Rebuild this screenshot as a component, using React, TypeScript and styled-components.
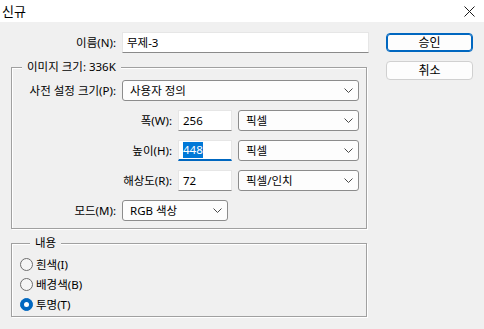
import React from "react";
import styled, { createGlobalStyle } from "styled-components";

const GlobalStyle = createGlobalStyle`
  html, body {
    margin: 0;
    padding: 0;
    background: #f0f0f0;
  }
  body {
    font-family: "Noto Sans", "Noto Sans CJK KR", sans-serif;
    font-size: 11.5px;
    color: #000;
  }
`;

const Window = styled.div`
  width: 484px;
  height: 329px;
  background: #f0f0f0;
  overflow: hidden;
`;

const TitleBar = styled.div`
  height: 22px;
  background: #ffffff;
  display: flex;
  align-items: center;
  justify-content: space-between;
  padding: 0 9px 0 2px;
`;

const Title = styled.span`
  font-size: 13px;
  line-height: 22px;
`;

const Body = styled.div`
  display: flex;
  padding: 10px 0 0 11px;
`;

const LeftColumn = styled.div`
  width: 358px;
  display: flex;
  flex-direction: column;
`;

const Row = styled.div`
  display: flex;
  align-items: center;
  gap: 6px;
  height: 21px;
`;

const Label = styled.span<{ $w: number }>`
  width: ${({ $w }) => $w}px;
  text-align: right;
  white-space: nowrap;
  line-height: 21px;
`;

const TextBox = styled.div<{ $w: number; $focused?: boolean }>`
  width: ${({ $w }) => $w}px;
  height: 21px;
  box-sizing: border-box;
  background: #ffffff;
  border: 1px solid #e6e6e6;
  border-bottom: ${({ $focused }) =>
    $focused ? "2px solid #0067c0" : "1px solid #8a8a8a"};
  padding: 0 4px;
  display: flex;
  align-items: center;
  line-height: 16px;
`;

const Selected = styled.span`
  background: #0078d7;
  color: #ffffff;
`;

const Select = styled.div<{ $w: number }>`
  width: ${({ $w }) => $w}px;
  height: 21px;
  box-sizing: border-box;
  background: #fdfdfd;
  border: 1px solid #8c8c8c;
  border-radius: 3px;
  padding: 0 5px 0 7px;
  display: flex;
  align-items: center;
  justify-content: space-between;
  line-height: 16px;
`;

const GroupBox = styled.fieldset`
  margin: 7px 0 0 0;
  width: 356px;
  box-sizing: border-box;
  border: 1px solid #a0a0a0;
  box-shadow: 1px 1px 0 #ffffff, inset 1px 1px 0 #ffffff;
  min-inline-size: 0;
`;

const SizeGroup = styled(GroupBox)`
  padding: 6px 0 7px 0;
  display: flex;
  flex-direction: column;
  gap: 9px;
`;

const ContentGroup = styled(GroupBox)`
  padding: 4px 0 2px 8px;
`;

const Legend = styled.legend`
  margin-left: 10px;
  padding: 0 5px;
  line-height: 14px;
  background: #f0f0f0;
`;

const RadioRow = styled.label`
  display: flex;
  align-items: center;
  gap: 3px;
  height: 20px;
`;

const RadioDot = styled.span<{ $checked?: boolean }>`
  width: 13px;
  height: 13px;
  box-sizing: border-box;
  border-radius: 50%;
  flex-shrink: 0;
  display: flex;
  align-items: center;
  justify-content: center;
  background: ${({ $checked }) => ($checked ? "#0067c0" : "#f5f5f5")};
  border: 1px solid ${({ $checked }) => ($checked ? "#0067c0" : "#6e6e6e")};

  &::after {
    content: "";
    display: ${({ $checked }) => ($checked ? "block" : "none")};
    width: 5px;
    height: 5px;
    border-radius: 50%;
    background: #ffffff;
  }
`;

const ButtonColumn = styled.div`
  margin-left: 17px;
  padding-top: 1px;
  width: 87px;
  display: flex;
  flex-direction: column;
  gap: 9px;
`;

const Button = styled.button<{ $primary?: boolean }>`
  width: 87px;
  height: 19px;
  box-sizing: border-box;
  padding: 0;
  font: inherit;
  font-size: 12px;
  line-height: 16px;
  color: #000;
  background: #fdfdfd;
  border-radius: 4px;
  border: 1px solid ${({ $primary }) => ($primary ? "#0067c0" : "#d0d0d0")};
  box-shadow: ${({ $primary }) => ($primary ? "inset 0 0 0 1px #0067c0" : "none")};
`;

function Chevron() {
  return (
    <svg width="9" height="5" viewBox="0 0 9 5">
      <path d="M0.5 0.5 L4.5 4.5 L8.5 0.5" fill="none" stroke="#4a4a4a" strokeWidth="1" />
    </svg>
  );
}

function CloseIcon() {
  return (
    <svg width="11" height="11" viewBox="0 0 11 11">
      <path d="M0.5 0.5 L10.5 10.5 M10.5 0.5 L0.5 10.5" stroke="#1a1a1a" strokeWidth="1" />
    </svg>
  );
}

function Dropdown({ w, children }: { w: number; children: React.ReactNode }) {
  return (
    <Select $w={w}>
      <span>{children}</span>
      <Chevron />
    </Select>
  );
}

export default function App() {
  return (
    <Window>
      <GlobalStyle />
      <TitleBar>
        <Title>신규</Title>
        <CloseIcon />
      </TitleBar>
      <Body>
        <LeftColumn>
          <Row>
            <Label $w={105}>이름(N):</Label>
            <TextBox $w={247}>무제-3</TextBox>
          </Row>

          <SizeGroup>
            <Legend>이미지 크기: 336K</Legend>
            <Row>
              <Label $w={104}>사전 설정 크기(P):</Label>
              <Dropdown w={237}>사용자 정의</Dropdown>
            </Row>
            <Row>
              <Label $w={160}>폭(W):</Label>
              <TextBox $w={54}>256</TextBox>
              <Dropdown w={121}>픽셀</Dropdown>
            </Row>
            <Row>
              <Label $w={160}>높이(H):</Label>
              <TextBox $w={54} $focused>
                <Selected>448</Selected>
              </TextBox>
              <Dropdown w={121}>픽셀</Dropdown>
            </Row>
            <Row>
              <Label $w={160}>해상도(R):</Label>
              <TextBox $w={54}>72</TextBox>
              <Dropdown w={121}>픽셀/인치</Dropdown>
            </Row>
            <Row>
              <Label $w={104}>모드(M):</Label>
              <Dropdown w={106}>RGB 색상</Dropdown>
            </Row>
          </SizeGroup>

          <ContentGroup>
            <Legend>내용</Legend>
            <RadioRow>
              <RadioDot />
              흰색(I)
            </RadioRow>
            <RadioRow>
              <RadioDot />
              배경색(B)
            </RadioRow>
            <RadioRow>
              <RadioDot $checked />
              투명(T)
            </RadioRow>
          </ContentGroup>
        </LeftColumn>

        <ButtonColumn>
          <Button $primary>승인</Button>
          <Button>취소</Button>
        </ButtonColumn>
      </Body>
    </Window>
  );
}
